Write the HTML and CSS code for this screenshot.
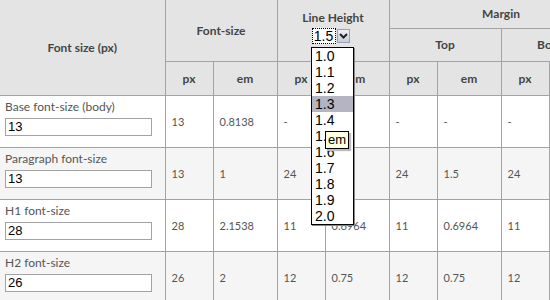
FILE: index.html
```html
<!DOCTYPE html>
<html lang="en">
<head>
  <meta charset="utf-8">
  <title>Font size calculator</title>
  <link rel="stylesheet" href="styles.css">
</head>
<body>
  <table id="calcTable">
    <colgroup>
      <col class="c-label">
      <col class="c-px"><col class="c-em">
      <col class="c-px"><col class="c-em">
      <col class="c-px"><col class="c-em">
      <col class="c-px"><col class="c-em">
    </colgroup>
    <thead>
      <tr class="h1">
        <th rowspan="3">Font size (px)</th>
        <th colspan="2" rowspan="2">Font-size</th>
        <th colspan="2" rowspan="2" class="lh">
          Line Height
          <div class="fakeSelect">
            <span class="val">1.5</span>
            <span class="arrow">
              <svg width="9" height="6" viewBox="0 0 9 6"><path d="M1 1 L4.5 4.5 L8 1" fill="none" stroke="#222" stroke-width="2"/></svg>
            </span>
          </div>
        </th>
        <th colspan="4">Margin</th>
      </tr>
      <tr class="h2">
        <th colspan="2">Top</th>
        <th colspan="2">Bottom</th>
      </tr>
      <tr class="h3">
        <th>px</th><th>em</th>
        <th>px</th><th>em</th>
        <th>px</th><th>em</th>
        <th>px</th><th>em</th>
      </tr>
    </thead>
    <tbody>
      <tr>
        <td class="label">Base font-size (body)<br><input type="text" value="13"></td>
        <td>13</td><td>0.8138</td>
        <td>-</td><td>-</td>
        <td>-</td><td>-</td>
        <td>-</td><td>-</td>
      </tr>
      <tr class="alt">
        <td class="label">Paragraph font-size<br><input type="text" value="13"></td>
        <td>13</td><td>1</td>
        <td>24</td><td>1.5</td>
        <td>24</td><td>1.5</td>
        <td>24</td><td>1.5</td>
      </tr>
      <tr>
        <td class="label">H1 font-size<br><input type="text" value="28"></td>
        <td>28</td><td>2.1538</td>
        <td>11</td><td>0.6964</td>
        <td>11</td><td>0.6964</td>
        <td>11</td><td>0.6964</td>
      </tr>
      <tr class="alt">
        <td class="label">H2 font-size<br><input type="text" value="26"></td>
        <td>26</td><td>2</td>
        <td>12</td><td>0.75</td>
        <td>12</td><td>0.75</td>
        <td>12</td><td>0.75</td>
      </tr>
    </tbody>
  </table>

  <!-- открытый список select поверх таблицы -->
  <ul class="dropList">
    <li>1.0</li><li>1.1</li><li>1.2</li><li class="hover">1.3</li>
    <li>1.4</li><li>1.5</li><li>1.6</li><li>1.7</li>
    <li>1.8</li><li>1.9</li><li>2.0</li>
  </ul>
  <div class="tooltip">em</div>
</body>
</html>
```
FILE: styles.css
```css
body {
    margin: 0;
    font-family: Lato, "Open Sans", sans-serif;
    color: #555;
    background: white;
    overflow: hidden;
}

#calcTable {
    border-collapse: collapse;
    table-layout: fixed;
    width: 613px;
    font-size: 11px;
}

.c-label { width: 165px; }
.c-px { width: 48px; }
.c-em { width: 64px; }

th, td {
    border: 1px solid #a3a3a3;
    padding: 0;
}

th {
    background-color: #e4e4e4;
    color: #444;
    font-weight: bold;
    font-size: 12px;
    text-align: center;
}

thead tr:first-child th { border-top: none; }
tr > :first-child { border-left: none; }

.h1 { height: 28px; }
.h2 { height: 33px; }
.h3 { height: 34px; }

th.lh {
    vertical-align: top;
    padding-top: 10px;
    line-height: 16px;
}

.fakeSelect {
    display: flex;
    width: 38px;
    height: 16px;
    margin: 2px 0 0 34px;
}

.fakeSelect .val {
    font-family: "Liberation Sans", Arial, sans-serif;
    font-weight: normal;
    font-size: 14px;
    color: #000;
    background: white;
    outline: 1px dotted #000;
    outline-offset: -1px;
    width: 24px;
    line-height: 16px;
    text-align: center;
}

.fakeSelect .arrow {
    width: 13px;
    height: 14px;
    margin: 1px 0 0 1px;
    background: linear-gradient(#eef0f6, #c8ccd8);
    border: 1px solid #9aa3b5;
    box-sizing: border-box;
    display: flex;
    align-items: center;
    justify-content: center;
}

tbody tr { height: 52px; }
tbody tr.alt { background-color: #f5f5f5; }

td {
    font-size: 11px;
    padding-left: 6px;
    vertical-align: middle;
}

td.label {
    padding: 3px 0 0 5px;
    font-size: 12px;
    line-height: 16px;
    vertical-align: top;
}

td.label input {
    width: 147px;
    height: 18px;
    box-sizing: border-box;
    margin: 3px 0 0 0;
    padding: 0 2px;
    border: 1px solid #a3a3a3;
    font-family: "Liberation Sans", Arial, sans-serif;
    font-size: 13px;
    color: #000;
    background: white;
}

.dropList {
    position: absolute;
    left: 311px;
    top: 47px;
    width: 41px;
    margin: 0;
    padding: 0;
    list-style: none;
    background: white;
    border: 1px solid #000;
    box-shadow: 1px 1px 0 #888;
}

.dropList li {
    height: 16px;
    line-height: 16px;
    padding-left: 3px;
    font-family: "Liberation Sans", Arial, sans-serif;
    font-size: 14px;
    color: #000;
}

.dropList li.hover { background-color: #b3b5c2; }

.tooltip {
    position: absolute;
    left: 325px;
    top: 131px;
    padding: 0 2px;
    height: 16px;
    line-height: 16px;
    font-family: "Liberation Sans", Arial, sans-serif;
    font-size: 13px;
    color: #000;
    background: #ffffe1;
    border: 1px solid #000;
    box-shadow: 2px 2px 1px #bbb;
}
```
